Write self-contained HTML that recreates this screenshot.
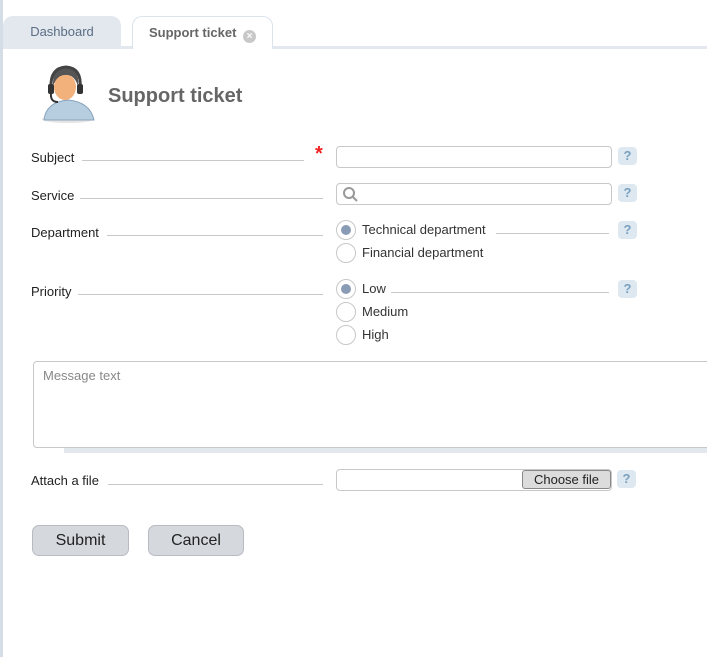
<!DOCTYPE html>
<html><head><meta charset="utf-8"><style>
*{box-sizing:border-box}
body{margin:0;width:707px;height:657px;background:#fff;font-family:"Liberation Sans",Arial,sans-serif;font-size:13px;color:#222;position:relative;overflow:hidden}
.abs{position:absolute}
.lb{position:absolute;left:31px;font-size:13px;display:flex;align-items:flex-end}
.dots{position:absolute;border-bottom:1px solid #c8c8c8;height:1px}
.inp{position:absolute;border:1px solid #c8c8c8;border-radius:4px;background:#fff}
.q{position:absolute;width:19px;height:18px;border-radius:4px;background:#dde8f0;color:#7aa0bf;font-weight:bold;font-size:13px;text-align:center;line-height:18px}
.rad{position:absolute;width:20px;height:20px;border-radius:50%;border:1px solid #c8c8c8;background:#fff}
.rad.on::after{content:"";position:absolute;left:4px;top:4px;width:10px;height:10px;border-radius:50%;background:#8a9bb5}
.rt{position:absolute;font-size:13px;color:#333}
.btn{position:absolute;height:31px;border:1px solid #b8bcc2;border-radius:7px;background:#d5d8dd;font-size:16px;color:#222;text-align:center;line-height:29px}
</style></head><body>
<div class="abs" style="left:0;top:0;width:3px;height:657px;background:#d4dce6"></div>
<div class="abs" style="left:3px;top:46px;width:704px;height:3px;background:#e3e8ee"></div>
<div class="abs" style="left:3px;top:16px;width:118px;height:32px;background:#e3e8ee;border-radius:10px 10px 0 0;text-align:center;line-height:32px;color:#5a6d85;font-size:13px">Dashboard</div>
<div class="abs" style="left:132px;top:16px;width:141px;height:33px;background:#fff;border:1px solid #dbe3ec;border-bottom:none;border-radius:10px 10px 0 0;line-height:31px;font-weight:bold;color:#666;font-size:13px;padding-left:16px">Support ticket <span style="display:inline-block;width:13px;height:13px;border-radius:50%;background:#c8c8c8;color:#fff;font-size:10px;line-height:13px;text-align:center;vertical-align:-2px;margin-left:3px">×</span></div>
<svg class="abs" style="left:38px;top:62px" width="62" height="62" viewBox="0 0 62 62">
<ellipse cx="30" cy="57" rx="26" ry="4" fill="#ccc" opacity=".5"/>
<path d="M6 58 Q8 40 30 38 Q52 40 56 58Z" fill="#b7cde0" stroke="#8aa3bb"/>
<ellipse cx="27" cy="25" rx="11" ry="13" fill="#f2b07a"/>
<path d="M15 24 Q14 6 28 5 Q42 6 40 24 Q36 12 27 13 Q19 13 15 24Z" fill="#555"/>
<path d="M13 26 Q12 6 28 5 Q44 6 42 26" fill="none" stroke="#444" stroke-width="3"/>
<rect x="10" y="22" width="6" height="10" rx="2" fill="#333"/><rect x="39" y="22" width="6" height="10" rx="2" fill="#333"/>
<path d="M13 31 Q12 40 20 40" stroke="#333" stroke-width="2" fill="none"/>
</svg>
<div class="abs" style="left:108px;top:85px;font-size:20px;font-weight:bold;color:#666">Support ticket</div>

<div class="lb" style="top:150px">Subject</div><div class="dots" style="left:82px;top:160px;width:222px"></div>
<div class="abs" style="left:315px;top:143px;color:#e22;font-size:20px;font-weight:bold">*</div>
<div class="inp" style="left:336px;top:146px;width:276px;height:22px"></div>
<div class="q" style="left:618px;top:147px">?</div>

<div class="lb" style="top:188px">Service</div><div class="dots" style="left:80px;top:198px;width:243px"></div>
<div class="inp" style="left:336px;top:183px;width:276px;height:22px"></div>
<svg class="abs" style="left:342px;top:186px" width="18" height="18"><circle cx="7" cy="7" r="5" fill="none" stroke="#999" stroke-width="2"/><line x1="11" y1="11" x2="15" y2="15" stroke="#999" stroke-width="2"/></svg>
<div class="q" style="left:618px;top:184px">?</div>

<div class="lb" style="top:225px">Department</div><div class="dots" style="left:107px;top:235px;width:216px"></div>
<div class="rad on" style="left:336px;top:220px"></div><div class="rt" style="left:362px;top:222px">Technical department</div>
<div class="dots" style="left:496px;top:233px;width:113px"></div>
<div class="q" style="left:618px;top:221px">?</div>
<div class="rad" style="left:336px;top:243px"></div><div class="rt" style="left:362px;top:245px">Financial department</div>

<div class="lb" style="top:284px">Priority</div><div class="dots" style="left:78px;top:294px;width:245px"></div>
<div class="rad on" style="left:336px;top:279px"></div><div class="rt" style="left:362px;top:281px">Low</div>
<div class="dots" style="left:391px;top:292px;width:218px"></div>
<div class="q" style="left:618px;top:280px">?</div>
<div class="rad" style="left:336px;top:302px"></div><div class="rt" style="left:362px;top:304px">Medium</div>
<div class="rad" style="left:336px;top:325px"></div><div class="rt" style="left:362px;top:327px">High</div>

<div class="abs" style="left:64px;top:446px;width:643px;height:7px;background:#e3e8ee"></div>
<div class="inp" style="left:33px;top:361px;width:690px;height:87px;padding:6px 9px;color:#888;font-size:13px">Message text</div>

<div class="lb" style="top:473px">Attach a file</div><div class="dots" style="left:108px;top:484px;width:215px"></div>
<div class="inp" style="left:336px;top:469px;width:276px;height:22px"></div>
<div class="abs" style="left:522px;top:470px;width:89px;height:19px;background:#dcdcdc;border:1px solid #888;border-radius:3px;text-align:center;line-height:17px;font-size:13px">Choose file</div>
<div class="q" style="left:617px;top:470px">?</div>

<div class="btn" style="left:32px;top:525px;width:97px">Submit</div>
<div class="btn" style="left:148px;top:525px;width:96px">Cancel</div>
</body></html>
